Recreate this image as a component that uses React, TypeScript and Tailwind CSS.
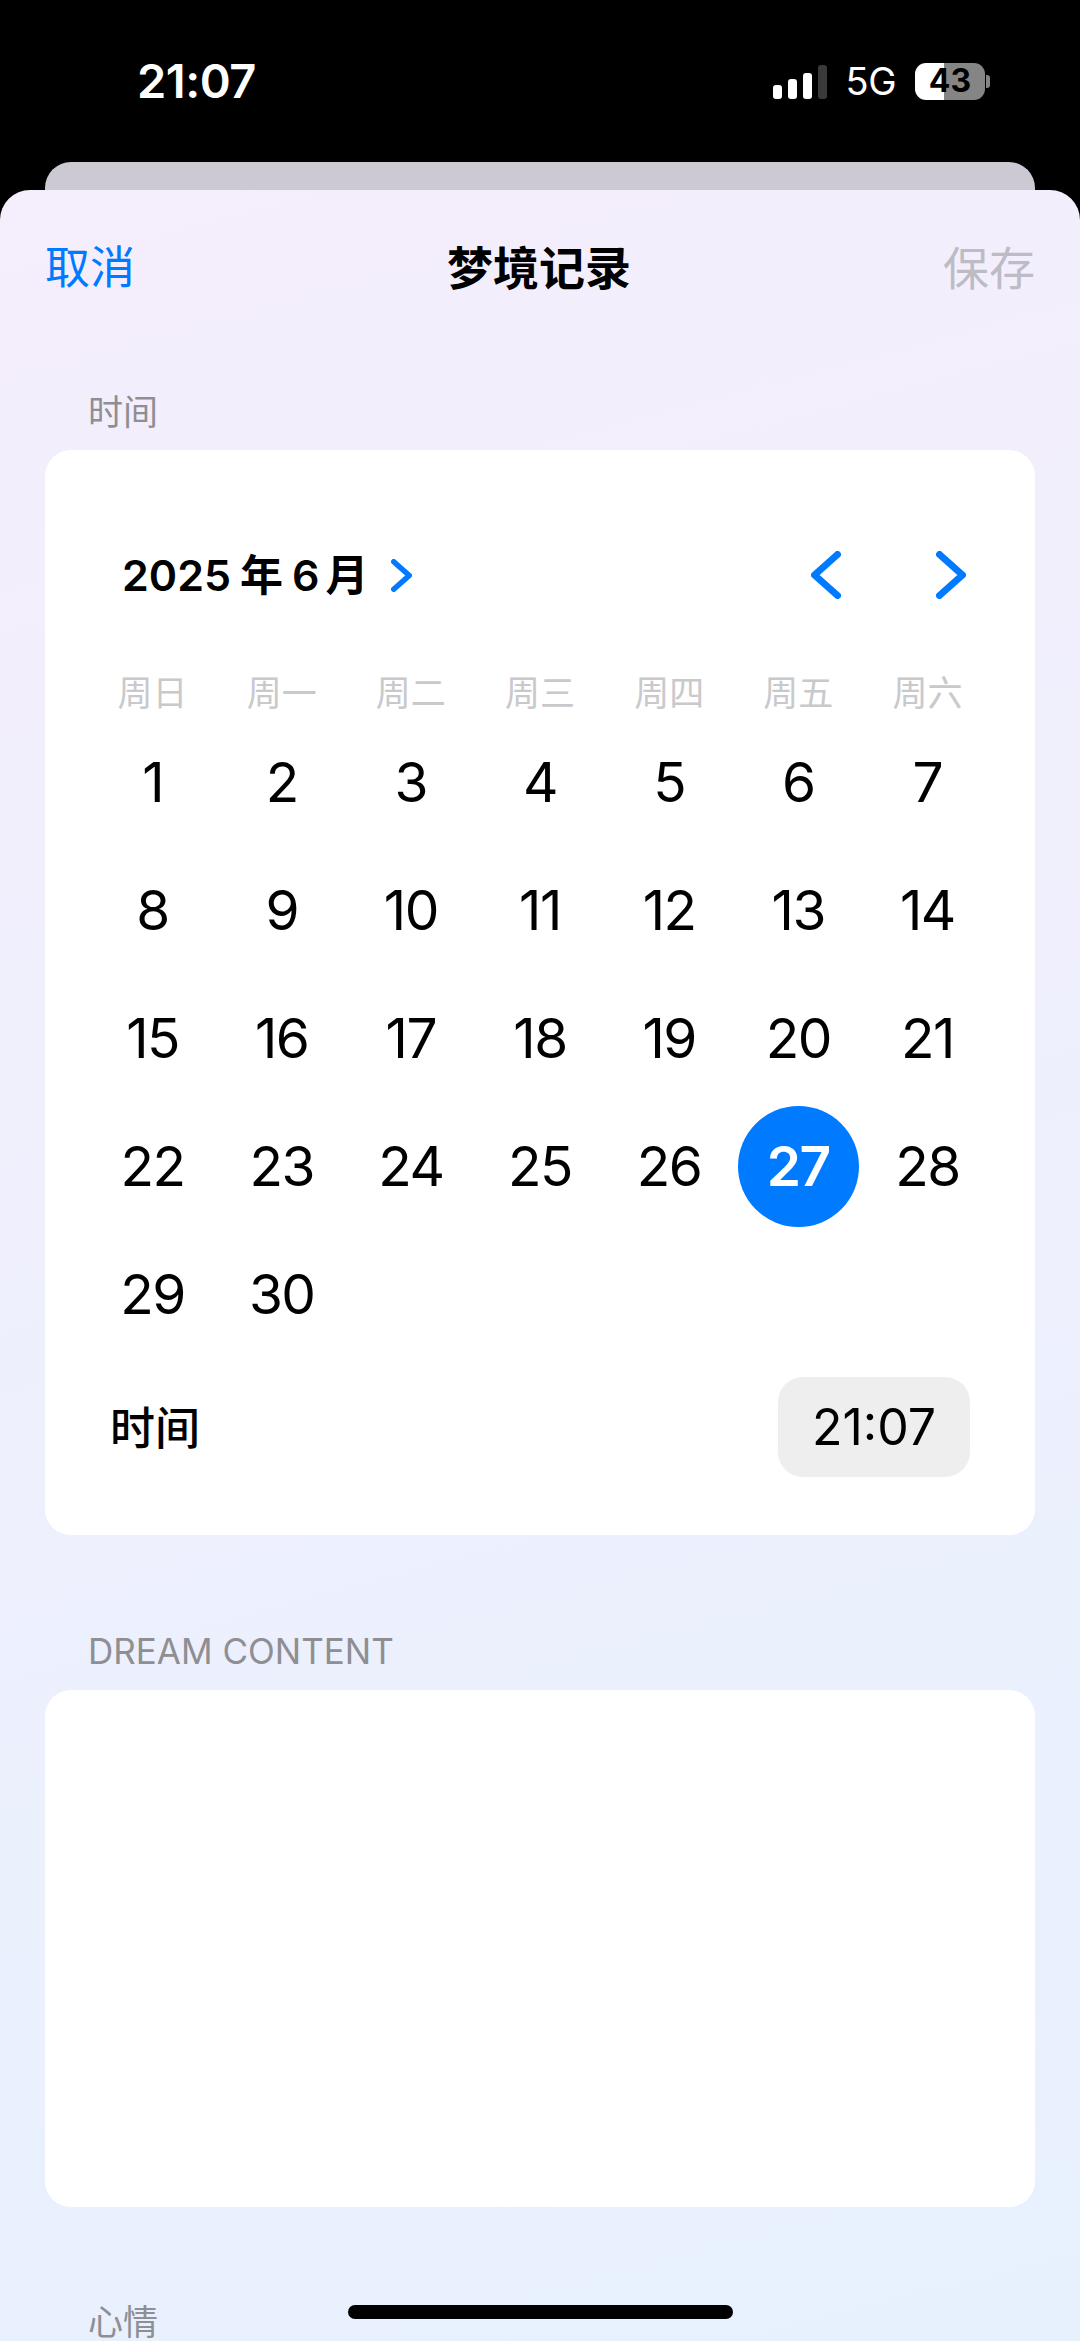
const DAYS = Array.from({ length: 30 }, (_, i) => i + 1);
const WEEK = ['周日', '周一', '周二', '周三', '周四', '周五', '周六'];

function Chevron({ left, w, h, sw }: { left?: boolean; w: number; h: number; sw: number }) {
  const pad = sw / 2;
  const points = left
    ? `${w - pad},${pad} ${pad},${h / 2} ${w - pad},${h - pad}`
    : `${pad},${pad} ${w - pad},${h / 2} ${pad},${h - pad}`;
  return (
    <svg width={w} height={h} viewBox={`0 0 ${w} ${h}`} fill="none">
      <polyline points={points} stroke="#007aff" strokeWidth={sw} strokeLinecap="round" strokeLinejoin="round" />
    </svg>
  );
}

function StatusBar() {
  return (
    <div className="h-[162px] pt-[59px] pl-[137px] pr-[90px] flex items-start justify-between text-white">
      <span className="text-[47px] leading-[44px] font-semibold tracking-[-0.5px]">21:07</span>
      <div className="flex items-center h-[44px]">
        {/* Signal */}
        <div className="flex items-end gap-[6px] h-[34px] mt-[1px]">
          <div className="w-[9px] h-[14px] rounded-[3px] bg-white" />
          <div className="w-[9px] h-[20px] rounded-[3px] bg-white" />
          <div className="w-[9px] h-[26px] rounded-[3px] bg-white" />
          <div className="w-[9px] h-[34px] rounded-[3px] bg-[#3a3a3a]" />
        </div>
        <span className="ml-[19px] text-[38px] leading-[44px] font-normal tracking-[-0.5px]">5G</span>
        {/* Battery */}
        <div className="ml-[19px] relative flex w-[70px] h-[37px]">
          <div className="w-[29px] rounded-l-[11px] bg-white" />
          <div className="flex-1 rounded-r-[11px] bg-[#858585]" />
          <span className="absolute inset-0 flex items-center justify-center text-[32px] leading-none font-bold text-black">43</span>
        </div>
        <div className="ml-[1px] w-[4px] h-[13px] rounded-r-[3px] bg-[#858585]" />
      </div>
    </div>
  );
}

function Calendar() {
  return (
    <div className="bg-white rounded-[26px] pt-[95px] pb-[58px] mx-[45px]">
      <div className="flex items-center justify-between h-[60px] pl-[77px] pr-[69px]">
        <div className="flex items-center">
          <div className="flex items-center gap-[9px] text-[43px] leading-[60px] font-semibold text-black">
            <span>2025</span>
            <span>年</span>
            <span>6</span>
            <span className="-ml-[3px]">月</span>
          </div>
          <div className="ml-[22px]">
            <Chevron w={21} h={33} sw={5.5} />
          </div>
        </div>
        <div className="flex items-center gap-[95px]">
          <Chevron left w={30} h={48} sw={7} />
          <Chevron w={30} h={48} sw={7} />
        </div>
      </div>

      <div className="mt-[68px] px-[43px] grid grid-cols-7">
        {WEEK.map((d) => (
          <div key={d} className="h-[40px] flex items-center justify-center text-[35px] text-[#c9c9cc]">
            {d}
          </div>
        ))}
      </div>

      <div className="mt-[5px] px-[43px] grid grid-cols-7">
        {DAYS.map((d) => (
          <div key={d} className="h-[128px] flex items-center justify-center">
            {d === 27 ? (
              <div className="w-[121px] h-[121px] rounded-full bg-[#007aff] flex items-center justify-center text-[55px] font-semibold text-white tracking-[-1.5px]">
                {d}
              </div>
            ) : (
              <span className="text-[55px] text-black tracking-[-1.5px]">{d}</span>
            )}
          </div>
        ))}
      </div>

      <div className="mt-[19px] pl-[65px] pr-[65px] flex items-center justify-between">
        <span className="text-[45px] font-medium text-black pt-[3px]">时间</span>
        <div className="w-[192px] h-[100px] rounded-[25px] bg-[#eeeeef] flex items-center justify-center text-[50px] text-black">
          21:07
        </div>
      </div>
    </div>
  );
}

export default function App() {
  return (
    <div
      className="h-[2341px] w-[1080px] overflow-hidden bg-black relative"
      style={{ fontFamily: 'Inter, "Noto Sans CJK SC", sans-serif' }}
    >
      <StatusBar />
      <div className="mx-[45px] h-[28px] rounded-t-[26px] bg-[#cdc9d2]" />

      <div className="h-[2151px] rounded-t-[30px] bg-linear-165 from-[#f5eefc] to-[#e7f1fe]">
        {/* Nav */}
        <div className="pt-[49px] px-[45px] flex items-center justify-between h-[107px]">
          <span className="text-[45px] text-[#007aff]">取消</span>
          <span className="text-[46px] font-semibold text-black">梦境记录</span>
          <span className="text-[46px] text-[#bdbcc4]">保存</span>
        </div>

        <div className="mt-[95px] mb-[18px] pl-[88px] h-[40px] flex items-center text-[35px] text-[#8e8e93]">时间</div>
        <Calendar />

        <div className="mt-[96px] mb-[19px] pl-[88px] h-[40px] flex items-center text-[35px] text-[#8e8e93]">DREAM CONTENT</div>
        <div className="mx-[45px] h-[517px] rounded-[26px] bg-white" />

        <div className="mt-[95px] pl-[88px] h-[40px] flex items-center text-[35px] text-[#8e8e93]">心情</div>
      </div>

      {/* Home indicator */}
      <div className="absolute left-[348px] top-[2305px] w-[385px] h-[14px] rounded-full bg-black" />
    </div>
  );
}
